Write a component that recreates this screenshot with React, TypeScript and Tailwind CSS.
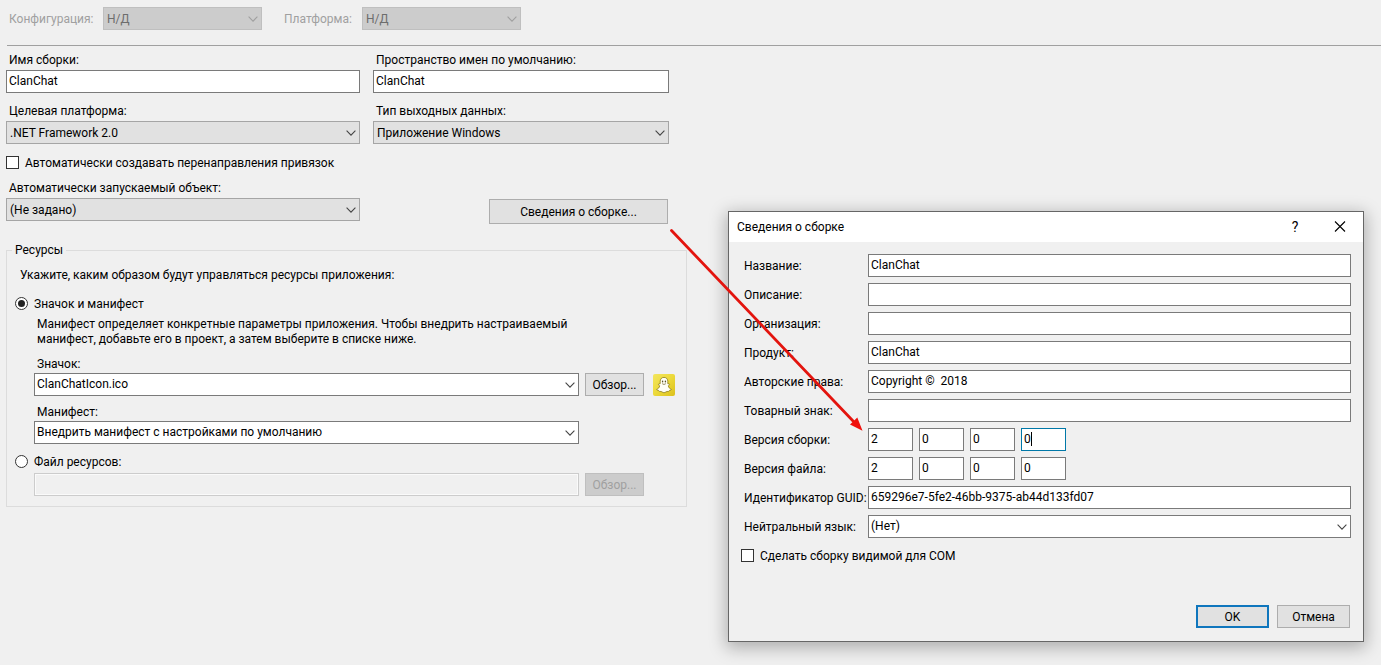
import { useState } from "react";
import type { ComponentProps, ReactNode } from "react";

function Chevron({ faded = false }: { faded?: boolean }) {
  return (
    <svg
      viewBox="0 0 10 6"
      className={
        faded
          ? "pointer-events-none absolute right-1 top-[9px] h-1.5 w-2.5 text-[#a0a0a0]"
          : "pointer-events-none absolute right-1 top-[9px] h-1.5 w-2.5 text-[#444]"
      }
      fill="none"
      stroke="currentColor"
      strokeWidth="1.1"
      aria-hidden="true"
    >
      <path d="M0.6 0.7 L5 5.1 L9.4 0.7" />
    </svg>
  );
}

type Tone = "gray" | "white" | "disabled";

const selectTones: Record<Tone, string> = {
  gray: "border-[#a5a5a5] bg-[#e1e1e1] text-black pl-[3px]",
  white: "border-[#7a7a7a] bg-white text-black pl-0.5 pb-0.5",
  disabled: "border-[#bfbfbf] bg-[#cccccc] text-[#6d6d6d] opacity-100 pl-[3px]",
};

function Select({ id, value, tone = "gray", className = "" }: { id: string; value: string; tone?: Tone; className?: string }) {
  return (
    <div className={`relative ${className}`}>
      <select
        id={id}
        disabled={tone === "disabled"}
        className={`block h-[23px] w-full appearance-none rounded-none border pr-5 leading-4 outline-none ${selectTones[tone]}`}
      >
        <option>{value}</option>
      </select>
      <Chevron faded={tone === "disabled"} />
    </div>
  );
}

function TextBox({ className = "", ...rest }: ComponentProps<"input">) {
  return (
    <input
      type="text"
      className={`block h-[23px] w-full min-w-0 rounded-none border border-[#7a7a7a] bg-white px-0.5 pb-0.5 leading-4 text-black outline-none ${className}`}
      {...rest}
    />
  );
}

function Label({ htmlFor, children, className = "" }: { htmlFor: string; children: ReactNode; className?: string }) {
  return (
    <label htmlFor={htmlFor} className={`block h-4 whitespace-nowrap pl-[3px] ${className}`}>
      {children}
    </label>
  );
}

function PushButton({ className = "", ...rest }: ComponentProps<"button">) {
  return (
    <button
      type="button"
      className={`h-[23px] shrink-0 whitespace-nowrap border border-[#adadad] bg-[#e1e1e1] leading-4 text-black disabled:border-[#bfbfbf] disabled:bg-[#cccccc] disabled:text-[#a0a0a0] ${className}`}
      {...rest}
    />
  );
}

function CheckBox({ id, children }: { id: string; children: ReactNode }) {
  return (
    <div className="flex h-4 items-start gap-1.5">
      <input
        id={id}
        type="checkbox"
        className="mt-px size-[13px] shrink-0 appearance-none border border-[#333] bg-white checked:bg-[#333]"
      />
      <label htmlFor={id} className="whitespace-nowrap">
        {children}
      </label>
    </div>
  );
}

function Radio({ id, checked, onSelect, children }: { id: string; checked: boolean; onSelect: () => void; children: ReactNode }) {
  return (
    <div className="flex h-4 items-start gap-1.5">
      <span className="relative mt-px flex size-[13px] shrink-0">
        <input
          id={id}
          type="radio"
          name="resources"
          checked={checked}
          onChange={onSelect}
          className="peer size-[13px] appearance-none rounded-full border border-[#333] bg-white"
        />
        <span className="pointer-events-none absolute inset-[3px] hidden rounded-full bg-[#222] peer-checked:block" />
      </span>
      <label htmlFor={id} className="whitespace-nowrap">
        {children}
      </label>
    </div>
  );
}

function GhostIcon() {
  return (
    <svg viewBox="0 0 22 22" className="size-[22px] shrink-0" role="img" aria-label="ClanChatIcon.ico">
      <defs>
        <linearGradient id="ghost-bg" x1="0" y1="0" x2="1" y2="1">
          <stop offset="0" stopColor="#f3e65e" />
          <stop offset="0.5" stopColor="#ecd93a" />
          <stop offset="1" stopColor="#dcc01c" />
        </linearGradient>
      </defs>
      <rect width="22" height="22" rx="2" fill="url(#ghost-bg)" />
      <path
        d="M11 3.4C8.6 3.4 7.2 5.1 7.2 7.4V9.7C6.6 10 5.7 9.7 5.3 10.3C5.1 10.9 6.4 11.3 6.7 11.8C6.5 13.4 5.2 14.8 3.7 15.3C3.4 16.1 5 16.3 5.7 16.5C6 16.9 5.9 17.5 6.5 17.5C7.6 17.3 8.5 17.4 9.2 18C10.3 18.9 11.7 18.9 12.8 18C13.5 17.4 14.4 17.3 15.5 17.5C16.1 17.5 16 16.9 16.3 16.5C17 16.3 18.6 16.1 18.3 15.3C16.8 14.8 15.5 13.4 15.3 11.8C15.6 11.3 16.9 10.9 16.7 10.3C16.3 9.7 15.4 10 14.8 9.7V7.4C14.8 5.1 13.4 3.4 11 3.4Z"
        fill="#fffef6"
        stroke="#8d7c1c"
        strokeWidth="0.8"
      />
      <ellipse cx="9.6" cy="7.5" rx="0.7" ry="0.9" fill="#5b5226" />
      <ellipse cx="12.4" cy="7.5" rx="0.7" ry="0.9" fill="#5b5226" />
      <path d="M9.2 9.7Q11 11.2 12.8 9.7" fill="none" stroke="#7a703a" strokeWidth="0.8" />
    </svg>
  );
}

function ResourcesGroup() {
  const [mode, setMode] = useState("manifest");
  return (
    <fieldset className="mt-[18px] max-w-[681px] border border-[#dcdcdc] pr-[11px] pb-2.5">
      <legend className="ml-[5px] h-4 px-[3px]">Ресурсы</legend>
      <p className="mt-[9px] pl-[13px]">Укажите, каким образом будут управляться ресурсы приложения:</p>
      <div className="mt-[13px] pl-2">
        <Radio id="res-manifest" checked={mode === "manifest"} onSelect={() => setMode("manifest")}>
          Значок и манифест
        </Radio>
      </div>
      <div className="pl-[27px]">
        <p className="mt-[5px] pl-[3px] leading-[15px]">
          Манифест определяет конкретные параметры приложения. Чтобы внедрить настраиваемый
          <br />
          манифест, добавьте его в проект, а затем выберите в списке ниже.
        </p>
        <div className="mt-[9px] grid grid-cols-[minmax(0,545px)_59px_25px] gap-x-[6px]">
          <Label htmlFor="icon" className="col-span-3 mb-px">
            Значок:
          </Label>
          <Select id="icon" value="ClanChatIcon.ico" tone="white" />
          <PushButton>Обзор...</PushButton>
          <div className="flex items-end pl-[3px]">
            <GhostIcon />
          </div>
          <Label htmlFor="manifest" className="col-span-3 mt-2 mb-px">
            Манифест:
          </Label>
          <Select id="manifest" value="Внедрить манифест с настройками по умолчанию" tone="white" />
        </div>
      </div>
      <div className="mt-2.5 pl-2">
        <Radio id="res-file" checked={mode === "file"} onSelect={() => setMode("file")}>
          Файл ресурсов:
        </Radio>
      </div>
      <div className="mt-[3px] grid grid-cols-[minmax(0,545px)_59px_25px] gap-x-[6px] pl-[27px]">
        <TextBox aria-label="Файл ресурсов" disabled className="border-[#cccccc]! bg-[#f0f0f0]! shadow-[inset_0_0_0_1px_#fafafa]" />
        <PushButton disabled>Обзор...</PushButton>
      </div>
    </fieldset>
  );
}

const textFields = [
  { id: "title", label: "Название:", value: "ClanChat" },
  { id: "description", label: "Описание:", value: "" },
  { id: "company", label: "Организация:", value: "" },
  { id: "product", label: "Продукт:", value: "ClanChat" },
  { id: "copyright", label: "Авторские права:", value: "Copyright ©\u00a0 2018" },
  { id: "trademark", label: "Товарный знак:", value: "" },
];

const versionFields = [
  { id: "assembly-version", label: "Версия сборки:", parts: ["2", "0", "0", "0"], active: 3 },
  { id: "file-version", label: "Версия файла:", parts: ["2", "0", "0", "0"], active: -1 },
];

function DialogRow({ id, label, children }: { id: string; label: string; children: ReactNode }) {
  return (
    <div className="grid grid-cols-[124px_minmax(0,1fr)] items-center">
      <label htmlFor={id} className="whitespace-nowrap">
        {label}
      </label>
      {children}
    </div>
  );
}

function AssemblyDialog() {
  return (
    <section
      role="dialog"
      aria-labelledby="dialog-title"
      className="absolute left-[728px] top-[211px] w-[636px] border border-[#666] bg-[#f0f0f0] shadow-[0_4px_16px_2px_rgba(0,0,0,0.28)]"
    >
      <header className="flex h-[30px] items-center bg-white pl-2 pr-[17px]">
        <h2 id="dialog-title" className="flex-1">
          Сведения о сборке
        </h2>
        <button type="button" aria-label="Справка" className="mr-[33px] w-3 text-sm leading-4">
          ?
        </button>
        <button type="button" aria-label="Закрыть">
          <svg viewBox="0 0 12 12" className="size-3" stroke="#000" strokeWidth="1.1" aria-hidden="true">
            <path d="M1 0.5 L11 10.5 M11 0.5 L1 10.5" />
          </svg>
        </button>
      </header>
      <div className="flex flex-col gap-1.5 pt-3 pl-[15px] pr-3">
        {textFields.map((f) => (
          <DialogRow key={f.id} id={f.id} label={f.label}>
            <TextBox id={f.id} defaultValue={f.value} />
          </DialogRow>
        ))}
        {versionFields.map((row) => (
          <DialogRow key={row.id} id={row.id} label={row.label}>
            <div className="flex gap-1.5">
              {row.parts.map((part, i) => (
                <span key={i} className="relative w-[45px]">
                  <TextBox
                    id={i === 0 ? row.id : `${row.id}-${i}`}
                    aria-label={`${row.label} ${i + 1}`}
                    defaultValue={part}
                    className={i === row.active ? "border-[#0078a8]!" : ""}
                  />
                  {i === row.active && <span className="absolute left-2.5 top-1 h-3.5 w-px bg-black" />}
                </span>
              ))}
            </div>
          </DialogRow>
        ))}
        <DialogRow id="guid" label="Идентификатор GUID:">
          <TextBox id="guid" defaultValue="659296e7-5fe2-46bb-9375-ab44d133fd07" />
        </DialogRow>
        <DialogRow id="language" label="Нейтральный язык:">
          <Select id="language" value="(Нет)" tone="white" />
        </DialogRow>
      </div>
      <div className="mt-2.5 pl-3">
        <CheckBox id="com-visible">Сделать сборку видимой для COM</CheckBox>
      </div>
      <footer className="mt-[41px] flex justify-end gap-2 pr-[13px] pb-[13px]">
        <PushButton className="w-[73px] border-2! border-[#0f76bd]!">OK</PushButton>
        <PushButton className="w-[73px]">Отмена</PushButton>
      </footer>
    </section>
  );
}

function RedArrow() {
  return (
    <svg
      viewBox="0 0 200 208"
      className="pointer-events-none absolute left-[666px] top-[226px] h-[208px] w-[200px]"
      aria-hidden="true"
    >
      <path d="M5.5 4.5 L188 196" stroke="#e3140e" strokeWidth="2.8" strokeLinecap="round" />
      <path d="M196.5 204.8 L184 198.4 L187.5 195.3 L191.3 191.4 Z" fill="#f0100c" />
    </svg>
  );
}

export default function App() {
  return (
    <main className="relative min-h-screen bg-[#f0f0f0] pl-1.5 pt-[7px] font-['Roboto','Noto_Sans',sans-serif] text-xs leading-4 text-black">
      <div className="flex h-[23px] items-center text-[#a0a0a0]">
        <Label htmlFor="configuration" className="w-[97px]">
          Конфигурация:
        </Label>
        <Select id="configuration" value="Н/Д" tone="disabled" className="w-[159px]" />
        <Label htmlFor="platform" className="ml-[19px] w-[81px]">
          Платформа:
        </Label>
        <Select id="platform" value="Н/Д" tone="disabled" className="w-[159px]" />
      </div>
      <hr className="ml-px mt-[15px] border-[#a0a0a0]" />

      <div className="grid max-w-[663px] grid-cols-[354fr_296fr] gap-x-[13px]">
        <div className="mt-1.5">
          <Label htmlFor="assembly-name" className="mb-0.5">
            Имя сборки:
          </Label>
          <TextBox id="assembly-name" defaultValue="ClanChat" />
        </div>
        <div className="mt-1.5">
          <Label htmlFor="namespace" className="mb-0.5">
            Пространство имен по умолчанию:
          </Label>
          <TextBox id="namespace" defaultValue="ClanChat" />
        </div>
        <div className="mt-2.5">
          <Label htmlFor="framework" className="mb-0.5">
            Целевая платформа:
          </Label>
          <Select id="framework" value=".NET Framework 2.0" />
        </div>
        <div className="mt-2.5">
          <Label htmlFor="output-type" className="mb-0.5">
            Тип выходных данных:
          </Label>
          <Select id="output-type" value="Приложение Windows" />
        </div>
        <div className="col-span-2 mt-[11px]">
          <CheckBox id="redirects">Автоматически создавать перенаправления привязок</CheckBox>
        </div>
        <div className="mt-[9px]">
          <Label htmlFor="startup" className="mb-0.5">
            Автоматически запускаемый объект:
          </Label>
          <Select id="startup" value="(Не задано)" />
        </div>
        <div className="flex items-end justify-end pr-px">
          <PushButton className="mt-7 h-[25px]! w-[179px]">Сведения о сборке...</PushButton>
        </div>
      </div>

      <ResourcesGroup />
      <AssemblyDialog />
      <RedArrow />
    </main>
  );
}
